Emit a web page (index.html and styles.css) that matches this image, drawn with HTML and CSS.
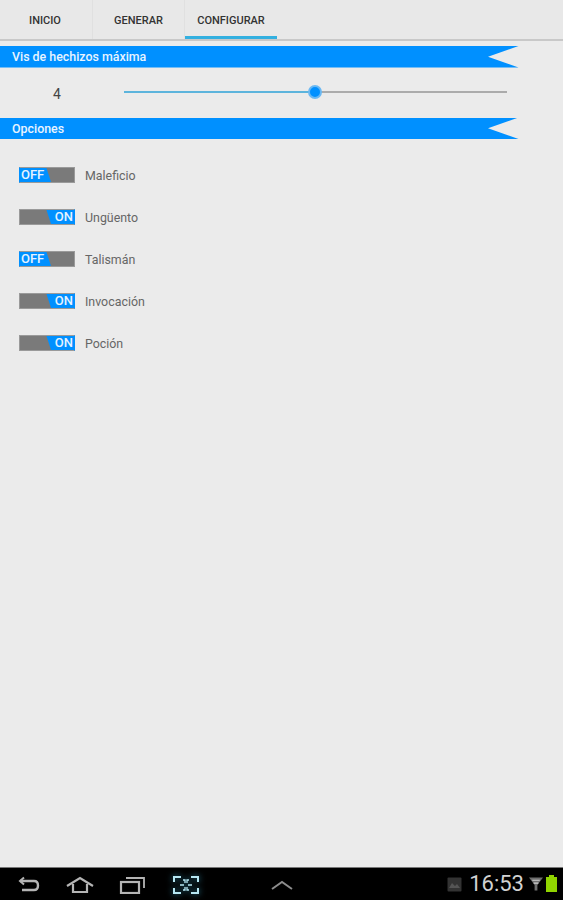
FILE: index.html
```html
<!DOCTYPE html>
<html>
  <head>
    <meta charset="utf-8">
    <title>Configurar</title>
    <link rel="stylesheet" href="styles.css">
  </head>
  <body>
    <div class="app">
      <div class="tabs">
        <div class="tab tab-first">INICIO</div>
        <div class="tab">GENERAR</div>
        <div class="tab tab-active">CONFIGURAR</div>
      </div>

      <div class="content">
        <h2 class="ribbon">Vis de hechizos máxima</h2>
        <div class="slider-row">
          <span class="slider-value">4</span>
          <div class="slider">
            <div class="slider-fill"></div>
            <div class="slider-thumb"></div>
            <div class="slider-rest"></div>
          </div>
        </div>

        <h2 class="ribbon">Opciones</h2>
        <ul class="options">
          <li class="option"><span class="toggle toggle-off">OFF</span>Maleficio</li>
          <li class="option"><span class="toggle toggle-on">ON</span>Ungüento</li>
          <li class="option"><span class="toggle toggle-off">OFF</span>Talismán</li>
          <li class="option"><span class="toggle toggle-on">ON</span>Invocación</li>
          <li class="option"><span class="toggle toggle-on">ON</span>Poción</li>
        </ul>
      </div>

      <div class="navbar">
        <div class="nav-buttons">
          <svg class="nav-icon" width="24" height="18" viewBox="0 0 24 18" fill="none" stroke="#b4b4b4" stroke-width="2.4">
            <path d="M3 5H17Q21 5 21 9.5Q21 14 17 14H5"/>
            <path d="M7 1.5L3 5L7 8.5" stroke-width="2"/>
          </svg>
          <svg class="nav-icon" width="30" height="18" viewBox="0 0 30 18" fill="none" stroke="#b4b4b4" stroke-width="2.2">
            <path d="M2 10L15 2L28 10"/>
            <path d="M8 8V16H22V8"/>
          </svg>
          <svg class="nav-icon nav-recent" width="27" height="18" viewBox="0 0 27 18" fill="none" stroke="#b4b4b4" stroke-width="2.2">
            <rect x="2" y="6" width="18" height="11"/>
            <path d="M7 2H25V12" stroke-width="1.8"/>
          </svg>
          <svg class="nav-icon nav-shot" width="26" height="18" viewBox="0 0 26 18" fill="none" stroke="#b5e6f2" stroke-width="2">
            <path d="M1 6V1H8M18 1H25V6M25 12V17H18M8 17H1V12"/>
            <path d="M10 4H12V7M16 4H14V7M7 9H11M15 9H19M10 14H12V11M16 14H14V11" stroke-width="1.3"/>
          </svg>
          <svg class="nav-icon nav-up" width="22" height="10" viewBox="0 0 22 10" fill="none" stroke="#8c8c8c" stroke-width="2">
            <path d="M1 9L11 2L21 9"/>
          </svg>
        </div>
        <div class="status">
          <svg class="status-pic" width="15" height="15" viewBox="0 0 15 15">
            <rect x="0.5" y="0.5" width="14" height="14" rx="1" fill="#333"/>
            <path d="M2 11L5 6L8 9L10 7L13 11Z" fill="#555"/>
          </svg>
          <span class="clock">16:53</span>
          <svg class="status-wifi" width="14" height="16" viewBox="0 0 15 16">
            <path d="M0 1H15L9 9V15H6V9Z" fill="#6e6e6e"/>
            <path d="M3.5 4H11.5M5 7H10" stroke="#cfcfcf" stroke-width="1.2"/>
          </svg>
          <div class="battery"></div>
        </div>
      </div>
    </div>
  </body>
</html>
```

FILE: styles.css
```css
body{margin:0;padding:0;font-family:'Roboto','Liberation Sans',sans-serif;color:#555;background:#ebebeb}
*{box-sizing:border-box}
.app{display:flex;flex-direction:column;height:900px;overflow:hidden}

.tabs{display:flex;height:41px;padding-bottom:1px;background:#e8e8e8;border-bottom:2px solid #c8c8c8}
.tab{display:flex;align-items:center;justify-content:center;width:92px;height:39px;padding-top:2px;font-size:11px;font-weight:500;color:#333;border-right:1px solid #e0e0e0}
.tab-first{width:93px;padding-right:2px}
.tab-active{border-right:0;border-bottom:3px solid #33b0e0;padding-top:5px}

.content{flex:1;padding-top:5px}
.ribbon{width:518.5px;height:21.5px;margin:0;padding-left:12px;font-size:12.4px;font-weight:500;line-height:22px;color:#e8f4ff;background:#0090ff;
  clip-path:polygon(0 0,100% 0,488px 50%,100% 100%,0 100%)}

.slider-row{display:flex;align-items:center;height:50px}
.slider-value{width:124px;padding:2px 10px 0 0;font-size:14px;line-height:20px;text-align:center;color:#444}
.slider{position:relative;display:flex;width:383px;height:2px;margin-top:-1px}
.slider-fill{width:191px;background:#5cb4dc}
.slider-rest{flex:1;background:#ababab}
.slider-thumb{position:absolute;left:184px;top:-6px;width:14px;height:14px;border-radius:50%;background:#0090ff;border:2px solid #6ab8f2}

.options{margin:0;padding:28px 0 0 19px;list-style:none}
.option{display:flex;align-items:center;height:16px;margin-bottom:26px;font-size:12.4px;color:#666}
.toggle{display:flex;align-items:center;width:56px;height:16px;margin-right:10px;padding:0 1px;font-size:13px;font-weight:500;line-height:16px;color:#e6f3ff}
.toggle-off{background:linear-gradient(72deg,#0090ff 0,#0090ff 29px,#7a7a7a 30px);border:1px solid #9a9a9a;border-left-color:#0090ff}
.toggle-on{justify-content:flex-end;background:linear-gradient(72deg,#7a7a7a 0,#7a7a7a 29px,#0090ff 30px);border:1px solid #9a9a9a;border-right-color:#0090ff}

.navbar{display:flex;align-items:center;justify-content:space-between;height:33px;background:#000;border-top:1px solid #777}
.nav-buttons{display:flex;align-items:center;padding-left:17px}
.nav-icon{margin-right:24px;margin-top:1px}
.nav-recent{margin-right:27px}
.nav-shot{margin-right:72px;filter:drop-shadow(0 0 3px #2f8fae)}
.nav-up{margin-right:0}
.status{display:flex;align-items:center;padding-right:6px}
.status-pic{margin-right:7px}
.clock{margin-right:5px;font-size:22px;line-height:30px;color:#d2d2d2}
.status-wifi{margin-right:3px}
.battery{position:relative;width:11px;height:15px;background:#90d400}
.battery::before{content:"";position:absolute;left:3px;top:-2px;width:5px;height:2px;background:#90d400}
```
